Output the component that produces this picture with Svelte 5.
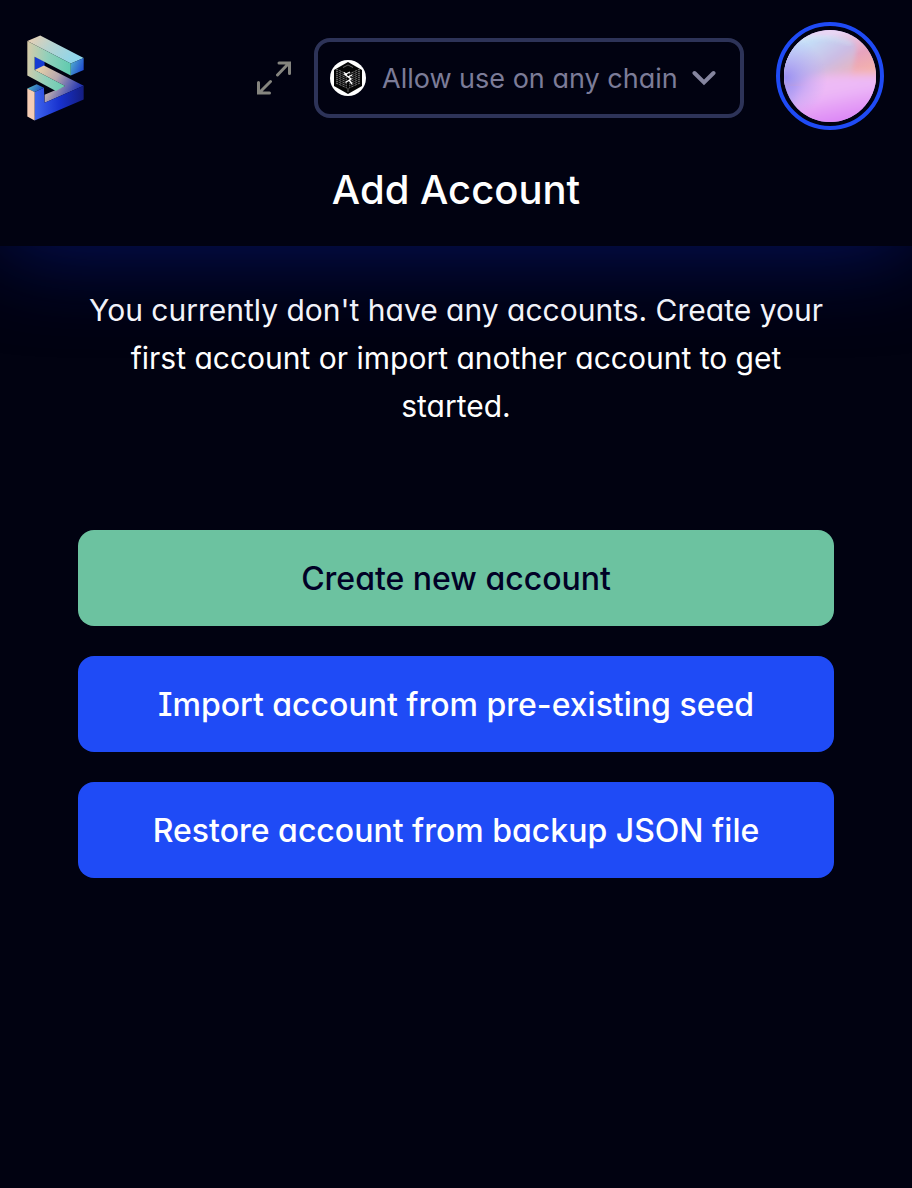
<script>
  let chain = $state('any');
  const actions = [
    { label: 'Create new account', primary: true },
    { label: 'Import account from pre-existing seed', primary: false },
    { label: 'Restore account from backup JSON file', primary: false }
  ];
  const rows = [10, 12, 14, 16, 18, 20, 22, 24];
</script>

<div class="app">
  <header>
    <div class="bar">
      <a class="logo" href="#home" aria-label="Home">
        <svg viewBox="33 29 172 257" width="57" height="86" aria-hidden="true">
          <defs>
            <linearGradient id="top" x1="0" y1="0" x2="1" y2="0.4">
              <stop offset="0" stop-color="#f0cfae" /><stop offset="0.45" stop-color="#b9d3cf" /><stop offset="1" stop-color="#8fd6ea" />
            </linearGradient>
            <linearGradient id="front" x1="0" y1="0" x2="1" y2="0.1">
              <stop offset="0" stop-color="#d9cba8" /><stop offset="0.5" stop-color="#8fd0bb" /><stop offset="1" stop-color="#63cbb0" />
            </linearGradient>
            <linearGradient id="end" x1="0" y1="0" x2="1" y2="0.6">
              <stop offset="0" stop-color="#55b6cc" /><stop offset="1" stop-color="#1f4bd0" />
            </linearGradient>
            <linearGradient id="band" x1="0" y1="0" x2="1" y2="0.4">
              <stop offset="0" stop-color="#f3dba6" /><stop offset="0.5" stop-color="#b7a8ae" /><stop offset="1" stop-color="#2234b4" />
            </linearGradient>
            <linearGradient id="base" x1="0" y1="0" x2="1" y2="0">
              <stop offset="0" stop-color="#3f66ee" /><stop offset="0.5" stop-color="#1832cf" /><stop offset="1" stop-color="#141d80" />
            </linearGradient>
            <linearGradient id="cap" x1="0" y1="0" x2="1" y2="0.3">
              <stop offset="0" stop-color="#5cc4c0" /><stop offset="1" stop-color="#1d4fc4" />
            </linearGradient>
          </defs>
          <path fill="url(#top)" d="M34 46 73 29 204 97 165 114Z" />
          <path fill="url(#end)" d="M165 114 204 97V133L165 150Z" />
          <path fill="#153bd2" d="M56 92 86 108V122L56 134Z" />
          <path fill="url(#band)" d="M56 133 84 120 204 181 86 232V208L148 182Z" />
          <path fill="url(#front)" d="M34 46 165 114V150L56 93V133L148 182 120 197 34 150Z" />
          <path fill="url(#base)" d="M56 200 84 187 86 232 204 181V222L56 286Z" />
          <path fill="url(#cap)" d="M34 189 62 176 84 187 56 200Z" />
          <path fill="#f5cdb5" d="M34 189 56 200V286L34 274Z" />
        </svg>
      </a>

      <div class="tools">
        <button class="expand" aria-label="Open in a new window">
          <svg viewBox="0 0 34 34" width="34" height="34" fill="none" stroke="#85857f" stroke-width="3" stroke-linecap="round" aria-hidden="true">
            <path d="M20.500 14 32 2M22 2H32.500V12.500M13.500 20.500 2 32M1.500 21.500V32H12.500" />
          </svg>
        </button>

        <div class="chain">
          <svg class="badge" viewBox="0 0 36 36" width="36" height="36" aria-hidden="true">
            <circle cx="18" cy="18" r="18" fill="#fff" />
            <path d="M18 2 32 10V26L18 34 4 26V10Z" fill="#050505" />
            {#each rows as y}
              <path d={`M6 ${y - 1} 17 ${y + 4}M30 ${y - 1} 19 ${y + 4}`} stroke="#aaa" stroke-width="0.700" stroke-dasharray="2.500 1" />
            {/each}
            <path d="M13 7.500 18 5 23 7.500M18 28V32" fill="none" stroke="#777" stroke-width="0.800" />
            <path d="M20 12 15 14.500 21 19 15.500 22.500M14 12.500 17 15M22 15 18 17M19.500 20.500 22 24" fill="none" stroke="#fff" stroke-width="1.300" />
          </svg>
          <select bind:value={chain} aria-label="Chain">
            <option value="any">Allow use on any chain</option>
          </select>
          <svg class="chevron" viewBox="0 0 24 16" width="24" height="16" fill="none" stroke="#85859f" stroke-width="4" stroke-linecap="round" aria-hidden="true">
            <path d="M2.500 3 12 12.500 21.500 3" />
          </svg>
        </div>

        <button class="account" aria-label="Accounts">
          <svg viewBox="0 0 92 92" width="92" height="92" aria-hidden="true">
            <defs>
              <clipPath id="disc"><circle cx="46" cy="46" r="46" /></clipPath>
              <linearGradient id="peach" gradientUnits="userSpaceOnUse" x1="60" y1="0" x2="76" y2="46">
                <stop offset="0" stop-color="#e9d6f4" /><stop offset="0.55" stop-color="#e7a3be" /><stop offset="1" stop-color="#f5b3a8" />
              </linearGradient>
              <linearGradient id="wave" gradientUnits="userSpaceOnUse" x1="30" y1="8" x2="62" y2="54">
                <stop offset="0" stop-color="#c4def8" /><stop offset="0.5" stop-color="#cbbce4" /><stop offset="1" stop-color="#efb4b4" />
              </linearGradient>
              <linearGradient id="rose" gradientUnits="userSpaceOnUse" x1="40" y1="44" x2="50" y2="94">
                <stop offset="0" stop-color="#efbdf4" /><stop offset="0.4" stop-color="#ecb8f7" /><stop offset="1" stop-color="#dc84f6" />
              </linearGradient>
              <radialGradient id="violet" cx="0.02" cy="0.52" r="0.45">
                <stop offset="0" stop-color="#9b90f2" /><stop offset="1" stop-color="#b9a6f4" stop-opacity="0" />
              </radialGradient>
              <filter id="soft" x="-20%" y="-20%" width="140%" height="140%"><feGaussianBlur stdDeviation="2" /></filter>
              <filter id="softer" x="-30%" y="-30%" width="160%" height="160%"><feGaussianBlur stdDeviation="4" /></filter>
            </defs>
            <g clip-path="url(#disc)">
              <rect width="92" height="92" fill="#c3a8f4" />
              <path d="M-10-10H104V56H-10Z" fill="url(#peach)" />
              <path d="M-10 14C20 4 60 4 71 14 75 22 68 32 67 54H-10Z" fill="url(#wave)" filter="url(#soft)" />
              <path d="M12 12C30 5 50 6 68 14" fill="none" stroke="#d9eef8" stroke-width="4" opacity="0.400" filter="url(#soft)" />
              <path d="M16 50C28 43 60 44 104 44V104H-4C12 84 6 64 16 50Z" fill="url(#rose)" filter="url(#softer)" />
              <rect width="92" height="92" fill="url(#violet)" />
            </g>
          </svg>
        </button>
      </div>
    </div>
    <h1>Add Account</h1>
  </header>

  <main>
    <p>You currently don't have any accounts. Create your first account or import another account to get started.</p>
    <div class="actions">
      {#each actions as action}
        <button class="action" class:primary={action.primary}>{action.label}</button>
      {/each}
    </div>
  </main>
</div>

<style>
  :global(body) {
    margin: 0;
    background: #010211;
  }

  .app {
    min-height: 100vh;
    overflow: hidden;
    background: #010211;
    color: #fff;
    font-family: Inter, 'Open Sans', sans-serif;
    font-feature-settings: 'cv11', 'cv08';
  }

  button,
  select {
    margin: 0;
    padding: 0;
    border: 0;
    background: none;
    color: inherit;
    font: inherit;
    font-feature-settings: inherit;
    cursor: pointer;
  }

  svg {
    display: block;
  }

  header {
    position: relative;
    z-index: 1;
    padding-top: 22px;
    background: #010211;
    box-shadow: 0 4px 90px 0 rgba(8, 28, 150, 0.6);
  }

  .bar {
    display: flex;
    align-items: center;
    justify-content: space-between;
    height: 112px;
    padding: 0 28px 0 27px;
  }

  .tools {
    display: flex;
    align-items: center;
    height: 100%;
  }

  .expand {
    margin-right: 23px;
  }

  .chain {
    position: relative;
    display: flex;
    align-items: center;
    box-sizing: border-box;
    width: 430px;
    height: 80px;
    margin-right: 32px;
    border: 4px solid #2d3358;
    border-radius: 16px;
  }

  .badge,
  .chevron {
    position: absolute;
    pointer-events: none;
  }

  .badge {
    left: 12px;
  }

  .chevron {
    right: 24px;
  }

  select {
    width: 100%;
    height: 100%;
    padding: 0 52px 0 64px;
    appearance: none;
    color: #7c7c98;
    font-size: 27px;
  }

  option {
    background: #010211;
  }

  .account {
    align-self: flex-start;
    padding: 4px;
    border: 4px solid #1f4bf6;
    border-radius: 50%;
  }

  h1 {
    margin: 0;
    font-size: 40px;
    font-weight: 500;
    line-height: 112px;
    text-align: center;
  }

  main {
    display: flex;
    flex-direction: column;
    gap: 100px;
    padding: 40px 78px;
  }

  p {
    margin: 0;
    font-size: 30px;
    line-height: 48px;
    text-align: center;
  }

  .actions {
    display: grid;
    gap: 30px;
  }

  .action {
    min-height: 96px;
    border-radius: 16px;
    background: #1f4bf6;
    font-size: 32px;
    font-weight: 500;
  }

  .primary {
    background: #6cc2a0;
    color: #010126;
  }
</style>
